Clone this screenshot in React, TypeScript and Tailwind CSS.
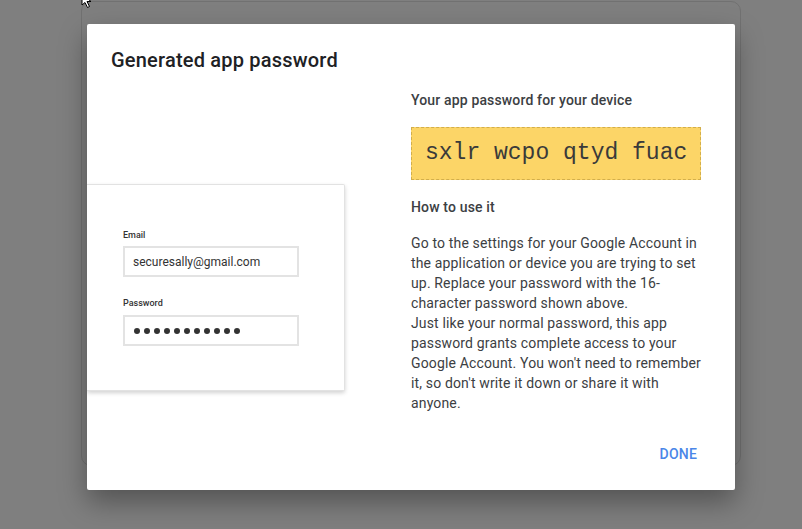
import React from "react";

const font = { fontFamily: "Roboto, 'Noto Sans', Arial, sans-serif" };

function LoginIllustration() {
  return (
    <div className="-ml-6 mt-[110px] w-[258px] rounded-r-[2px] border border-l-0 border-[#e2e2e2] bg-white pb-[44px] pl-[36px] pt-[44px] shadow-[0_2px_4px_rgba(0,0,0,0.18)]">
      <div className="text-[9px] font-medium leading-[12px] text-[#333]">Email</div>
      <div className="mt-[5px] flex h-[31px] w-[176px] items-center border-2 border-[#e3e3e3] pl-[8px] text-[12px] text-[#333]">
        securesally@gmail.com
      </div>
      <div className="mt-[20px] text-[9px] font-medium leading-[12px] text-[#333]">Password</div>
      <div className="mt-[6px] flex h-[31px] w-[176px] items-center gap-[4px] border-2 border-[#e3e3e3] pl-[9px]">
        {Array.from({ length: 11 }).map((_, i) => (
          <span key={i} className="h-[6px] w-[6px] rounded-full bg-[#333]" />
        ))}
      </div>
    </div>
  );
}

export default function App() {
  return (
    <div className="relative h-[529px] w-[802px] overflow-hidden bg-[#7f7f7f]" style={font}>
      {/* page card behind the dialog */}
      <div className="ml-[81px] mt-[1px] h-[465px] w-[660px] rounded-[10px] border border-[#717171]" />

      {/* mouse cursor */}
      <svg className="absolute left-[81px] top-[-7px]" width="14" height="16" viewBox="0 0 14 16">
        <path d="M1 1 L1 12 L4 9.5 L6.5 14.5 L8.5 13.5 L6 8.5 L10 8.5 Z" fill="#fff" stroke="#000" strokeWidth="1" />
      </svg>

      <div className="absolute left-[87px] top-[24px] flex h-[466px] w-[648px] flex-col overflow-hidden rounded-[2px] bg-white px-6 pt-[22px] shadow-[0_12px_28px_rgba(0,0,0,0.35)]">
        <h1 className="text-[20px] font-medium leading-[28px] tracking-[0.2px] text-[#202124]">Generated app password</h1>

        <div className="flex items-start">
          <div className="w-[300px]">
            <LoginIllustration />
          </div>

          <div className="w-[296px] pt-4 text-[14px] leading-[20px] tracking-[0.15px] text-[#3c4043]">
            <div className="font-medium text-[#3c4043]">Your app password for your device</div>
            <div className="mt-[17px] inline-block border border-dashed border-[#d2ae4c] bg-[#fcd567] px-[13px] py-[10px] text-[23px] leading-[31px] tracking-normal text-[#3a3a3a]" style={{ fontFamily: "'Liberation Mono', 'Courier New', monospace" }}>
              sxlr wcpo qtyd fuac
            </div>
            <div className="mt-[17px] font-medium">How to use it</div>
            <p className="mt-4">
              Go to the settings for your Google Account in the application or device you are trying to set up. Replace your password with the 16-character password shown above.
              <br />
              Just like your normal password, this app password grants complete access to your Google Account. You won't need to remember it, so don't write it down or share it with anyone.
            </p>
          </div>
        </div>

        <div className="mt-[23px] flex justify-end">
          <button className="px-[14px] py-2 text-[14px] font-medium leading-[20px] tracking-[0.2px] text-[#4a86e8]">DONE</button>
        </div>
      </div>
    </div>
  );
}
